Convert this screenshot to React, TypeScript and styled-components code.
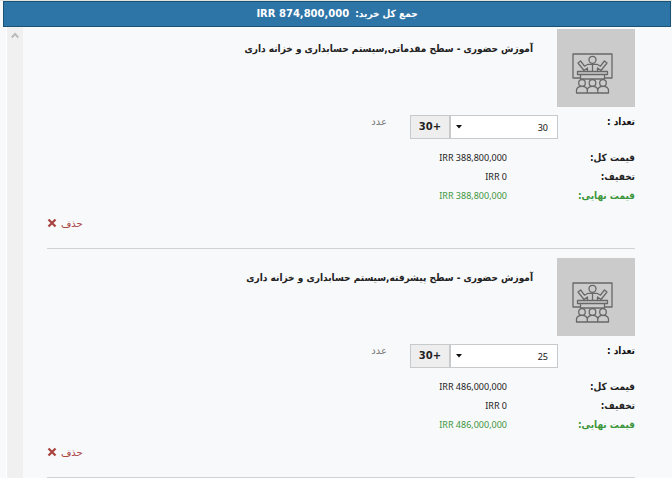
import React, { useState } from "react";
import styled, { createGlobalStyle } from "styled-components";

const GlobalStyle = createGlobalStyle`
  *, *::before, *::after { box-sizing: border-box; }
  body {
    margin: 0;
    background: #f8f9fb;
    color: #222;
    font-family: "DejaVu Sans Condensed", "DejaVu Sans", sans-serif;
    font-size: 10px;
    overflow: hidden;
  }
`;

const Page = styled.main`
  height: 100vh;
  display: flex;
  flex-direction: column;
  overflow: hidden;
  padding: 0 1px 0 3px;
  border-top: 1px solid #dfe3df;
`;

const TotalBar = styled.header`
  flex: none;
  height: 26px;
  display: flex;
  align-items: center;
  justify-content: center;
  gap: 6px;
  background: #2d74a7;
  border: 1px solid #1b5377;
  color: #fff;
  font-weight: bold;
  line-height: 24px;
`;

const TotalAmount = styled.span`
  font-family: "DejaVu Sans", sans-serif;
`;

const Body = styled.div`
  flex: 1;
  min-height: 0;
  display: flex;
  margin-left: 3px;
  border-left: 1px solid #fff;
`;

const Items = styled.ul`
  flex: 1;
  min-width: 0;
  margin: 0;
  padding: 0 36px 0 24px;
  list-style: none;
`;

const ScrollTrack = styled.div`
  flex: none;
  width: 16px;
  padding-top: 5px;
  background: #f0f0f0;
  display: flex;
  justify-content: center;
  align-items: flex-start;
`;

const Item = styled.li`
  padding-top: 9px;
  border-bottom: 1px solid #d0d2d3;

  &:first-child {
    padding-top: 2px;
  }
`;

const ProductRow = styled.div`
  display: flex;
  gap: 24px;
`;

const Thumb = styled.div`
  flex: none;
  width: 78px;
  height: 78px;
  background: #cbcbcb;
`;

const Title = styled.h2`
  margin: 10px 0 0;
  font-size: 10px;
  line-height: 20px;
  font-weight: bold;
  white-space: nowrap;
`;

const QuantityRow = styled.div`
  display: flex;
  margin-top: 8px;
  height: 24px;
`;

const QuantityLabel = styled.label`
  width: 77px;
  line-height: 14px;
  font-weight: bold;
  color: #111;
`;

const SelectBox = styled.div`
  position: relative;
  width: 108px;
  height: 24px;
`;

const Select = styled.select`
  appearance: none;
  width: 100%;
  height: 100%;
  padding: 0 9px;
  border: 1px solid #c8c9cb;
  border-radius: 0;
  background: #fff;
  color: #111;
  font: 9px "Noto Sans", sans-serif;
`;

const Caret = styled.svg`
  position: absolute;
  left: 6px;
  top: 10px;
  pointer-events: none;
`;

const MoreButton = styled.button`
  width: 40px;
  height: 24px;
  padding: 0 0 2px;
  border: 1px solid #c8c9cb;
  background: #eee;
  color: #222;
  font: bold 10px "DejaVu Sans", sans-serif;
`;

const Unit = styled.span`
  margin-right: 23px;
  font-family: "DejaVu Sans", sans-serif;
  line-height: 14px;
  color: #777;
`;

const Prices = styled.dl`
  margin: 9px 0 0;
`;

const PriceRow = styled.div<{ $final?: boolean }>`
  display: flex;
  line-height: 19px;
  color: ${(p) => (p.$final ? "#3c963c" : "#222")};
`;

const PriceLabel = styled.dt`
  width: 128px;
  font-weight: bold;
`;

const PriceValue = styled.dd`
  margin: 0;
  font-family: "Noto Sans", sans-serif;
  font-size: 9px;
`;

const Actions = styled.div`
  display: flex;
  justify-content: flex-end;
  padding: 10px 0 17px;
`;

const DeleteButton = styled.button`
  display: flex;
  align-items: center;
  gap: 4px;
  height: 16px;
  padding: 0;
  border: 0;
  background: none;
  color: #a94442;
  font: 10px "DejaVu Sans", sans-serif;
`;

function TrainingIcon() {
  return (
    <svg width="78" height="78" viewBox="0 0 78 78" fill="none" stroke="#686868" strokeWidth="1.3" strokeLinejoin="round" aria-hidden="true">
      <path d="M23.500 49H16V25h39v24h-7.500" />
      <circle cx="35.500" cy="30.800" r="3.500" />
      <path d="M30.500 42v-3l-3.500 2.500-6-7.500 2.600-2 3.900 5.200 3.500-1.900h9l3.500 1.900 3.900-5.200 2.600 2-6 7.500-3.500-2.500v3M35.500 36v6" />
      <path d="M20.500 42.500h30v3h-30zM23.500 45.500V50h24v-4.500" />
      <circle cx="25" cy="54" r="3.300" />
      <circle cx="35.500" cy="54" r="3.300" />
      <circle cx="46" cy="54" r="3.300" />
      <path d="M19.500 64v-2.500c0-2.500 2.300-4.200 5.500-4.200s5.300 1.700 5.300 4.200c0-2.500 2-4.200 5.200-4.200s5.300 1.700 5.300 4.200c0-2.500 2-4.200 5.200-4.200s5.500 1.700 5.500 4.200V64zM30.300 61.500V64M40.800 61.500V64" />
    </svg>
  );
}

interface CartItem {
  id: string;
  title: string;
  quantity: number;
  total: string;
  discount: string;
  final: string;
}

const cart: CartItem[] = [
  {
    id: "basic",
    title: "آموزش حضوری - سطح مقدماتی,سیستم حسابداری و خزانه داری",
    quantity: 30,
    total: "IRR 388,800,000",
    discount: "IRR 0",
    final: "IRR 388,800,000",
  },
  {
    id: "advanced",
    title: "آموزش حضوری - سطح پیشرفته,سیستم حسابداری و خزانه داری",
    quantity: 25,
    total: "IRR 486,000,000",
    discount: "IRR 0",
    final: "IRR 486,000,000",
  },
];

const quantities = Array.from({ length: 30 }, (_, i) => i + 1);

function CartEntry({ item }: { item: CartItem }) {
  const [quantity, setQuantity] = useState(item.quantity);
  const fieldId = `quantity-${item.id}`;
  return (
    <Item dir="rtl">
      <ProductRow>
        <Thumb>
          <TrainingIcon />
        </Thumb>
        <Title>{item.title}</Title>
      </ProductRow>
      <QuantityRow>
        <QuantityLabel htmlFor={fieldId}>تعداد :</QuantityLabel>
        <SelectBox>
          <Select id={fieldId} value={quantity} onChange={(e) => setQuantity(Number(e.target.value))}>
            {quantities.map((n) => (
              <option key={n} value={n}>
                {n}
              </option>
            ))}
          </Select>
          <Caret width="6" height="4" viewBox="0 0 6 4" aria-hidden="true">
            <path d="M0 0h6L3 3.500z" fill="#111" />
          </Caret>
        </SelectBox>
        <MoreButton type="button">+30</MoreButton>
        <Unit>عدد</Unit>
      </QuantityRow>
      <Prices>
        <PriceRow>
          <PriceLabel>قیمت کل:</PriceLabel>
          <PriceValue dir="ltr">{item.total}</PriceValue>
        </PriceRow>
        <PriceRow>
          <PriceLabel>تخفیف:</PriceLabel>
          <PriceValue dir="ltr">{item.discount}</PriceValue>
        </PriceRow>
        <PriceRow $final>
          <PriceLabel>قیمت نهایی:</PriceLabel>
          <PriceValue dir="ltr">{item.final}</PriceValue>
        </PriceRow>
      </Prices>
      <Actions>
        <DeleteButton type="button">
          حذف
          <svg width="10" height="10" viewBox="0 0 10 10" aria-hidden="true">
            <path d="M1.500 1.500l7 7M8.500 1.500l-7 7" stroke="currentColor" strokeWidth="2.300" />
          </svg>
        </DeleteButton>
      </Actions>
    </Item>
  );
}

export default function App() {
  return (
    <>
      <GlobalStyle />
      <Page>
        <TotalBar dir="rtl">
          <span>جمع کل خرید:</span>
          <TotalAmount dir="ltr">IRR 874,800,000</TotalAmount>
        </TotalBar>
        <Body>
          <ScrollTrack>
            <svg width="8" height="7" viewBox="0 0 8 7" aria-hidden="true">
              <path d="M.7 5.500L4 2l3.300 3.500" fill="none" stroke="#bcbcbc" strokeWidth="2" />
            </svg>
          </ScrollTrack>
          <Items>
            {cart.map((item) => (
              <CartEntry key={item.id} item={item} />
            ))}
          </Items>
        </Body>
      </Page>
    </>
  );
}
